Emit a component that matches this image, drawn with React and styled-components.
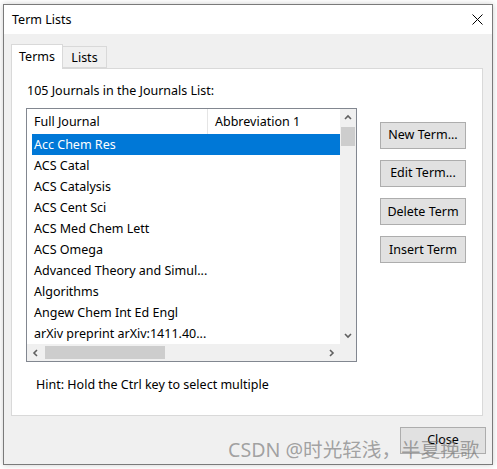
import styled, { createGlobalStyle } from "styled-components";

const GlobalStyle = createGlobalStyle`
  html, body {
    margin: 0;
    padding: 0;
    background: #ffffff;
  }
  body {
    font-family: "Noto Sans", "Noto Sans CJK SC", sans-serif;
    font-size: 12.5px;
    color: #000;
  }
`;

const journals = [
  "Acc Chem Res",
  "ACS Catal",
  "ACS Catalysis",
  "ACS Cent Sci",
  "ACS Med Chem Lett",
  "ACS Omega",
  "Advanced Theory and Simul...",
  "Algorithms",
  "Angew Chem Int Ed Engl",
  "arXiv preprint arXiv:1411.40...",
];

const Desktop = styled.div`
  position: relative;
  width: 497px;
  height: 469px;
  overflow: hidden;
  box-sizing: border-box;
  padding: 4px 0 0 3px;
`;

const Window = styled.div`
  width: 490px;
  height: 461px;
  box-sizing: border-box;
  border: 1px solid #7a7a7a;
  background: #f0f0f0;
  display: flex;
  flex-direction: column;
  box-shadow: 0 0 6px rgba(0, 0, 0, 0.2);
`;

const TitleBar = styled.div`
  height: 29px;
  flex: none;
  background: #ffffff;
  display: flex;
  align-items: center;
  justify-content: space-between;
  padding: 0 9px 0 8px;
`;

const Title = styled.span`
  line-height: 16px;
`;

const Body = styled.div`
  flex: 1;
  display: flex;
  flex-direction: column;
  padding: 10px 9px 0 7px;
`;

const TabStrip = styled.div`
  display: flex;
  align-items: flex-end;
  height: 24px;
`;

const Tab = styled.div`
  position: relative;
  z-index: ${(p) => (p.$active ? 2 : 1)};
  box-sizing: border-box;
  width: ${(p) => p.$width}px;
  height: ${(p) => (p.$active ? 25 : 22)}px;
  margin-bottom: ${(p) => (p.$active ? -1 : 0)}px;
  margin-left: ${(p) => (p.$active ? 0 : -1)}px;
  border: 1px solid #d9d9d9;
  border-bottom: ${(p) => (p.$active ? "none" : "1px solid #d9d9d9")};
  background: ${(p) => (p.$active ? "#ffffff" : "#f0f0f0")};
  display: flex;
  align-items: center;
  justify-content: center;
  padding-bottom: ${(p) => (p.$active ? 2 : 0)}px;
`;

const Panel = styled.div`
  height: 348px;
  box-sizing: border-box;
  border: 1px solid #d9d9d9;
  background: #ffffff;
  padding: 13px 0 0 14px;
  display: flex;
  flex-direction: column;
`;

const Label = styled.div`
  line-height: 18px;
  padding-left: 1px;
`;

const MainRow = styled.div`
  display: flex;
  margin-top: 8px;
`;

const ListBox = styled.div`
  width: 331px;
  height: 254px;
  box-sizing: border-box;
  border: 1px solid #828790;
  display: grid;
  grid-template-columns: 1fr 16px;
  grid-template-rows: 1fr 17px;
`;

const ListContent = styled.div`
  overflow: hidden;
  display: flex;
  flex-direction: column;
`;

const HeaderRow = styled.div`
  display: flex;
  height: 25px;
  flex: none;
`;

const HeaderCell = styled.div`
  box-sizing: border-box;
  width: ${(p) => p.$width}px;
  flex: none;
  padding-left: 7px;
  line-height: 25px;
  border-right: ${(p) => (p.$divider ? "1px solid #e5e5e5" : "none")};
  white-space: nowrap;
`;

const Rows = styled.div`
  padding-left: 5px;
`;

const Row = styled.div`
  height: 21px;
  line-height: 21px;
  padding-left: 2px;
  white-space: nowrap;
  background: ${(p) => (p.$selected ? "#0078d7" : "transparent")};
  color: ${(p) => (p.$selected ? "#ffffff" : "#000000")};
`;

const VScroll = styled.div`
  background: #f0f0f0;
  display: flex;
  flex-direction: column;
`;

const HScroll = styled.div`
  background: #f0f0f0;
  display: flex;
  align-items: center;
`;

const Corner = styled.div`
  background: #f0f0f0;
`;

const ArrowBox = styled.div`
  flex: none;
  width: ${(p) => p.$w}px;
  height: ${(p) => p.$h}px;
  display: flex;
  align-items: center;
  justify-content: center;
`;

const VThumb = styled.div`
  height: 19px;
  margin: 1px 1px 0;
  background: #cdcdcd;
`;

const Spacer = styled.div`
  flex: 1;
`;

const HThumb = styled.div`
  width: 120px;
  height: 13px;
  margin-left: 1px;
  background: #cdcdcd;
`;

const ButtonColumn = styled.div`
  display: flex;
  flex-direction: column;
  gap: 11px;
  margin: 14px 0 0 23px;
`;

const Button = styled.div`
  box-sizing: border-box;
  width: 86px;
  height: 27px;
  border: 1px solid #adadad;
  background: #e1e1e1;
  display: flex;
  align-items: center;
  justify-content: center;
  padding-bottom: ${(p) => (p.$raise ? 3 : 1)}px;
  white-space: nowrap;
`;

const Hint = styled.div`
  margin-top: 14px;
  padding-left: 10px;
  line-height: 18px;
`;

const Footer = styled.div`
  display: flex;
  justify-content: flex-end;
  margin: 11px -3px 0 0;
`;

const Watermark = styled.div`
  position: absolute;
  left: 228px;
  top: 437px;
  font-size: 19.6px;
  line-height: 26px;
  color: rgba(110, 110, 110, 0.62);
  white-space: nowrap;
  pointer-events: none;
`;

const Chevron = ({ dir }) => {
  const paths = {
    up: "M1 5 L4 2 L7 5",
    down: "M1 2 L4 5 L7 2",
    left: "M5 1 L2 4 L5 7",
    right: "M2 1 L5 4 L2 7",
  };
  return (
    <svg width="8" height="8" viewBox="0 0 8 8">
      <path d={paths[dir]} fill="none" stroke="#606060" strokeWidth="1.6" />
    </svg>
  );
};

const CloseIcon = () => (
  <svg width="11" height="11" viewBox="0 0 11 11">
    <path d="M0.5 0.5 L10.5 10.5 M10.5 0.5 L0.5 10.5" stroke="#000" strokeWidth="1" />
  </svg>
);

export default function App() {
  return (
    <Desktop>
      <GlobalStyle />
      <Window>
        <TitleBar>
          <Title>Term Lists</Title>
          <CloseIcon />
        </TitleBar>
        <Body>
          <TabStrip>
            <Tab $active $width={52}>Terms</Tab>
            <Tab $width={45}>Lists</Tab>
          </TabStrip>
          <Panel>
            <Label>105 Journals in the Journals List:</Label>
            <MainRow>
              <ListBox>
                <ListContent>
                  <HeaderRow>
                    <HeaderCell $width={181} $divider>Full Journal</HeaderCell>
                    <HeaderCell $width={132}>Abbreviation 1</HeaderCell>
                  </HeaderRow>
                  <Rows>
                    {journals.map((j, i) => (
                      <Row key={j} $selected={i === 0}>{j}</Row>
                    ))}
                  </Rows>
                </ListContent>
                <VScroll>
                  <ArrowBox $w={16} $h={17}><Chevron dir="up" /></ArrowBox>
                  <VThumb />
                  <Spacer />
                  <ArrowBox $w={16} $h={17}><Chevron dir="down" /></ArrowBox>
                </VScroll>
                <HScroll>
                  <ArrowBox $w={17} $h={17}><Chevron dir="left" /></ArrowBox>
                  <HThumb />
                  <Spacer />
                  <ArrowBox $w={17} $h={17}><Chevron dir="right" /></ArrowBox>
                </HScroll>
                <Corner />
              </ListBox>
              <ButtonColumn>
                <Button $raise>New Term...</Button>
                <Button $raise>Edit Term...</Button>
                <Button>Delete Term</Button>
                <Button>Insert Term</Button>
              </ButtonColumn>
            </MainRow>
            <Hint>Hint: Hold the Ctrl key to select multiple</Hint>
          </Panel>
          <Footer>
            <Button $raise>Close</Button>
          </Footer>
        </Body>
      </Window>
      <Watermark>CSDN @时光轻浅，半夏挽歌</Watermark>
    </Desktop>
  );
}
